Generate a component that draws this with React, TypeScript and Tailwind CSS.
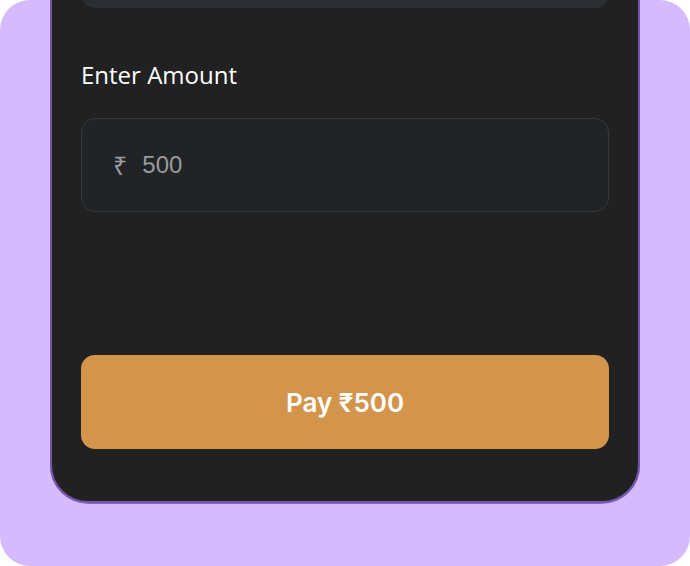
export default function App() {
    return (
        <div className="w-[690px] h-[566px] bg-white">
            <div className="w-[690px] h-[566px] rounded-[30px] bg-[#d5bbfd] px-[50px] flex flex-col">
                <div className="-mt-[82px] pt-[20px] px-[29px] pb-[52px] flex flex-col bg-[#212121] border-2 border-[#7356ab] rounded-[38px] shadow-[0_1px_0_#8a6cc0]">
                    <div className="h-[68px] rounded-[14px] bg-[#2a2d31]" />

                    <label className="mt-[51px] h-[32px] flex items-center text-[24px] leading-[32px] text-white font-['Open_Sans',sans-serif]">
                        Enter Amount
                    </label>

                    <div className="mt-[27px] h-[94px] flex items-center pl-[31px] rounded-[14px] bg-[#212427] border border-[#35393c] font-['Liberation_Sans',sans-serif]">
                        <span className="text-[25px] leading-none text-[#9a9b9c] font-['Noto_Sans',sans-serif]">₹</span>
                        <span className="ml-[15px] text-[24px] leading-none text-[#9a9b9c]">500</span>
                    </div>

                    <button className="mt-[143px] h-[94px] rounded-[14px] bg-[#d2954b] text-white text-[26px] font-semibold font-['Inter','Noto_Sans',sans-serif]">
                        Pay ₹500
                    </button>
                </div>
            </div>
        </div>
    );
}
